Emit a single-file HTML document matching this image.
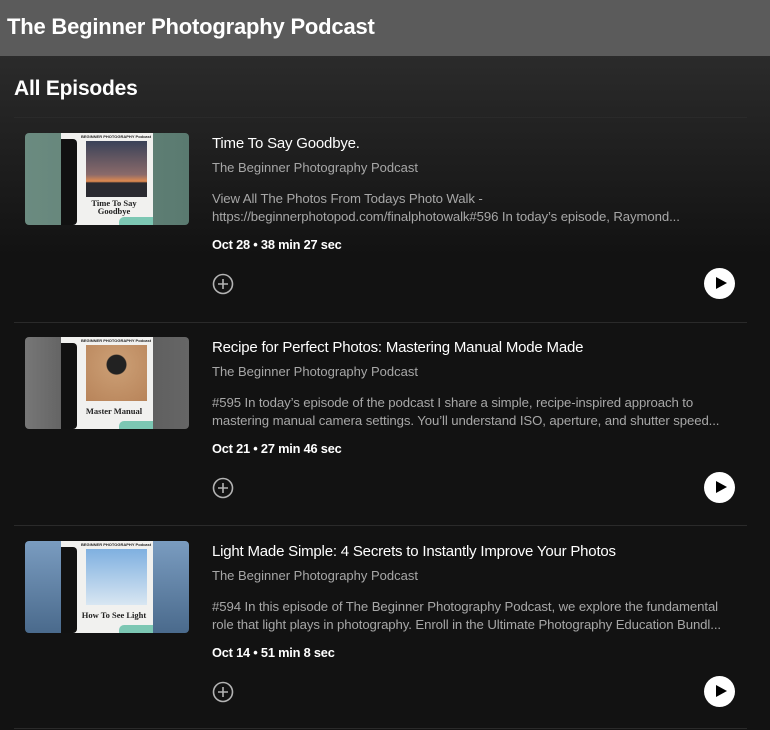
<!DOCTYPE html>
<html><head><meta charset="utf-8"><style>
*{margin:0;padding:0;box-sizing:border-box}
body{width:770px;height:730px;overflow:hidden;background:#121212;font-family:"Liberation Sans",sans-serif;color:#fff;position:relative}
.hdr{position:absolute;left:0;top:0;width:770px;height:56px;background:#5b5b5b;}
.hdr h1{position:absolute;left:7px;top:14px;font-size:22px;font-weight:bold;letter-spacing:-0.2px}
.grad{position:absolute;left:0;top:56px;width:770px;height:200px;background:linear-gradient(#2b2b2b,#121212)}
.ae{position:absolute;left:14px;top:77px;font-size:21px;font-weight:bold;letter-spacing:-0.2px}
.sep{position:absolute;left:14px;width:733px;height:1px;background:#2a2a2a}
.row{position:absolute;left:0;width:770px;height:204px}
.th{position:absolute;left:25px;top:16px;width:164px;height:92px;border-radius:4px;overflow:hidden}
.sq{position:absolute;left:36px;top:0;width:92px;height:92px;background:#f1f1ef}
.cam{position:absolute;left:0;top:6px;width:16px;height:86px;background:#111;border-radius:0 4px 4px 0}
.bt{position:absolute;left:20px;top:1px;font-size:4px;color:#222;font-weight:bold;white-space:nowrap}
.ph{position:absolute;left:25px;top:8px;width:61px;height:56px;}
.cap{position:absolute;left:14px;top:66px;width:78px;text-align:center;font-family:"Liberation Serif",serif;font-weight:bold;font-size:8.5px;line-height:8px;color:#222}
.tag{position:absolute;right:0;bottom:0;width:34px;height:8px;background:#7cc7b3;border-radius:5px 0 0 0}
.t{position:absolute;left:212px;top:18px;font-size:15px;letter-spacing:-0.2px}
.p{position:absolute;left:212px;top:43px;font-size:13px;color:#a7a7a7}
.d{position:absolute;left:212px;top:73px;font-size:13.2px;color:#a7a7a7;line-height:18px;width:540px;letter-spacing:-0.1px;white-space:nowrap}
.dt{position:absolute;left:212px;top:120px;font-size:12.8px;font-weight:bold;letter-spacing:-0.2px}
.plus{position:absolute;left:212px;top:156px;width:22px;height:22px}
.play{position:absolute;left:704px;top:151px;width:31px;height:31px;border-radius:50%;background:#fff}
.play:after{content:"";position:absolute;left:12px;top:9px;border-left:11px solid #000;border-top:6.5px solid transparent;border-bottom:6.5px solid transparent}
</style></head><body>
<div class="hdr"><h1>The Beginner Photography Podcast</h1></div>
<div class="grad"></div>
<div class="ae">All Episodes</div>
<div class="sep" style="top:117px"></div>
<div class="sep" style="top:322px"></div>
<div class="sep" style="top:525px"></div>
<div class="sep" style="top:728px"></div>

<div class="row" style="top:117px">
 <div class="th" style="background:linear-gradient(90deg,#6b8b80,#5a7a70)"><div class="sq"><div class="cam"></div><div class="bt">BEGINNER PHOTOGRAPHY Podcast</div><div class="ph" style="background:linear-gradient(#3a4258,#8a6a6a 60%,#e08a50 72%,#2a2a30 75%)"></div><div class="cap">Time To Say<br>Goodbye</div><div class="tag"></div></div></div>
 <div class="t">Time To Say Goodbye.</div>
 <div class="p">The Beginner Photography Podcast</div>
 <div class="d">View All The Photos From Todays Photo Walk -<br>https://beginnerphotopod.com/finalphotowalk#596 In today’s episode, Raymond...</div>
 <div class="dt">Oct 28 • 38 min 27 sec</div>
 <svg class="plus" viewBox="0 0 22 22"><circle cx="11" cy="11" r="9.5" fill="none" stroke="#b3b3b3" stroke-width="1.6"/><path d="M11 6v10M6 11h10" stroke="#b3b3b3" stroke-width="1.6"/></svg>
 <div class="play"></div>
</div>

<div class="row" style="top:321px">
 <div class="th" style="background:linear-gradient(90deg,#777,#555 40%,#666)"><div class="sq"><div class="cam"></div><div class="bt">BEGINNER PHOTOGRAPHY Podcast</div><div class="ph" style="background:radial-gradient(circle at 50% 35%,#222 20%,#c89a70 22%,#b8845a)"></div><div class="cap" style="top:70px">Master Manual</div><div class="tag"></div></div></div>
 <div class="t">Recipe for Perfect Photos: Mastering Manual Mode Made</div>
 <div class="p">The Beginner Photography Podcast</div>
 <div class="d">#595 In today’s episode of the podcast I share a simple, recipe-inspired approach to<br>mastering manual camera settings. You’ll understand ISO, aperture, and shutter speed...</div>
 <div class="dt">Oct 21 • 27 min 46 sec</div>
 <svg class="plus" viewBox="0 0 22 22"><circle cx="11" cy="11" r="9.5" fill="none" stroke="#b3b3b3" stroke-width="1.6"/><path d="M11 6v10M6 11h10" stroke="#b3b3b3" stroke-width="1.6"/></svg>
 <div class="play"></div>
</div>

<div class="row" style="top:525px">
 <div class="th" style="background:linear-gradient(#7a9cc0,#4a6a8c)"><div class="sq"><div class="cam"></div><div class="bt">BEGINNER PHOTOGRAPHY Podcast</div><div class="ph" style="background:linear-gradient(#7fb0e0,#d8e6f2)"></div><div class="cap" style="top:70px">How To See Light</div><div class="tag"></div></div></div>
 <div class="t">Light Made Simple: 4 Secrets to Instantly Improve Your Photos</div>
 <div class="p">The Beginner Photography Podcast</div>
 <div class="d">#594 In this episode of The Beginner Photography Podcast, we explore the fundamental<br>role that light plays in photography. Enroll in the Ultimate Photography Education Bundl...</div>
 <div class="dt">Oct 14 • 51 min 8 sec</div>
 <svg class="plus" viewBox="0 0 22 22"><circle cx="11" cy="11" r="9.5" fill="none" stroke="#b3b3b3" stroke-width="1.6"/><path d="M11 6v10M6 11h10" stroke="#b3b3b3" stroke-width="1.6"/></svg>
 <div class="play"></div>
</div>
</body></html>
